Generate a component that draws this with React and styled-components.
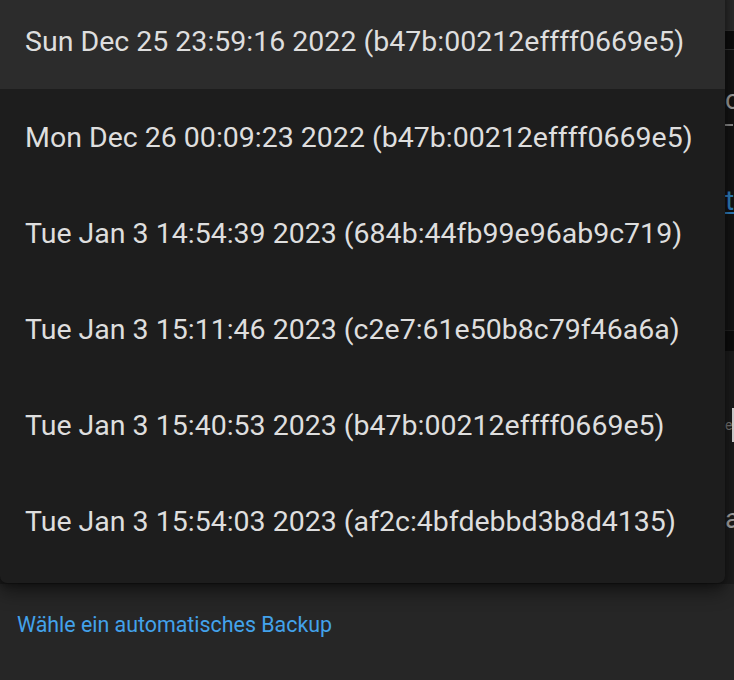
import styled, { createGlobalStyle } from "styled-components";

const backups = [
  { date: "Sun Dec 25 23:59:16 2022", id: "b47b:00212effff0669e5" },
  { date: "Mon Dec 26 00:09:23 2022", id: "b47b:00212effff0669e5" },
  { date: "Tue Jan 3 14:54:39 2023", id: "684b:44fb99e96ab9c719" },
  { date: "Tue Jan 3 15:11:46 2023", id: "c2e7:61e50b8c79f46a6a" },
  { date: "Tue Jan 3 15:40:53 2023", id: "b47b:00212effff0669e5" },
  { date: "Tue Jan 3 15:54:03 2023", id: "af2c:4bfdebbd3b8d4135" },
];

const GlobalStyle = createGlobalStyle`
  html, body {
    margin: 0;
    padding: 0;
    background: #262626;
    overflow: hidden;
    -webkit-font-smoothing: antialiased;
  }
  * {
    box-sizing: border-box;
  }
`;

const Page = styled.div`
  position: relative;
  width: 734px;
  height: 680px;
  overflow: hidden;
  background: #262626;
  font-family: Roboto, "Liberation Sans", sans-serif;
`;

const Backdrop = styled.div`
  display: flex;
  flex-direction: column;
  height: 584px;
`;

const TopBar = styled.div`
  height: 30px;
  background: #2b2b2b;
`;

const ToolBar = styled.div`
  height: 20px;
  background: #0d0d0d;
  border-top: 1px solid #333333;
  border-bottom: 1px solid #333333;
`;

const DarkPanel = styled.div`
  height: 280px;
  background: #141414;
  padding: 36px 0 0 725px;
  display: flex;
  flex-direction: column;
`;

const GreyText = styled.span`
  font-size: ${(p) => p.$size || 28}px;
  line-height: ${(p) => p.$size || 28}px;
  color: ${(p) => p.$color || "#a0a0a0"};
  white-space: nowrap;
`;

const Dash = styled.div`
  width: 8px;
  height: 2px;
  margin-top: 10px;
  background: #8a8a8a;
`;

const EdgeLink = styled.span`
  margin-top: 62px;
  font-size: 28px;
  line-height: 26px;
  color: #2f7fc0;
  text-decoration: underline;
  white-space: nowrap;
`;

const BlackBand = styled.div`
  height: 21px;
  background: #0d0d0d;
  border-top: 1px solid #232323;
`;

const LowerPanel = styled.div`
  flex: 1;
  background: #1c1c1c;
  padding: 57px 0 0 725px;
  display: flex;
  flex-direction: column;
`;

const FieldRow = styled.div`
  display: flex;
  justify-content: space-between;
  align-items: center;
  height: 34px;
`;

const Cursor = styled.div`
  width: 2px;
  height: 34px;
  background: #d8d8d8;
`;

const LowerText = styled.span`
  margin-top: 60px;
  font-size: 28px;
  color: #a8a8a8;
  white-space: nowrap;
`;

const Footer = styled.div`
  height: 96px;
  display: flex;
  align-items: center;
  padding: 0 0 16px 17px;
`;

const BackupLink = styled.a`
  font-size: 21.4px;
  color: #43a2eb;
  text-decoration: none;
  cursor: pointer;
`;

const Menu = styled.ul`
  position: absolute;
  top: -21px;
  left: 0;
  width: 725px;
  margin: 0;
  padding: 14px 0;
  list-style: none;
  background: #1d1d1d;
  border-radius: 0 0 7px 7px;
  box-shadow: 0 9px 18px rgba(0, 0, 0, 0.45), 0 2px 6px rgba(0, 0, 0, 0.3);
`;

const Item = styled.li`
  height: 96px;
  display: flex;
  align-items: center;
  padding: 0 28px 0 25px;
  font-size: 28.5px;
  color: #dedede;
  white-space: nowrap;
  background: ${(p) => (p.$selected ? "#2c2c2c" : "transparent")};
  cursor: pointer;
`;

export default function App() {
  return (
    <>
      <GlobalStyle />
      <Page>
        <Backdrop>
          <TopBar />
          <ToolBar />
          <DarkPanel>
            <GreyText>co</GreyText>
            <Dash />
            <EdgeLink>to</EdgeLink>
          </DarkPanel>
          <BlackBand />
          <LowerPanel>
            <FieldRow>
              <GreyText $size={14} $color="#777777">e</GreyText>
              <Cursor />
            </FieldRow>
            <LowerText>a</LowerText>
          </LowerPanel>
        </Backdrop>
        <Footer>
          <BackupLink>Wähle ein automatisches Backup</BackupLink>
        </Footer>
        <Menu>
          {backups.map((b, i) => (
            <Item key={i} $selected={i === 0}>
              {b.date} ({b.id})
            </Item>
          ))}
        </Menu>
      </Page>
    </>
  );
}
